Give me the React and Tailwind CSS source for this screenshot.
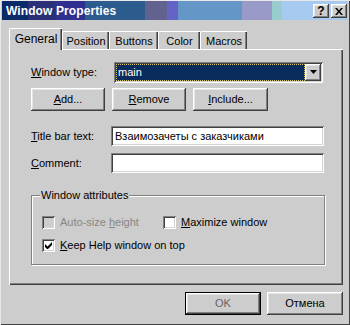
import React from "react";

const raised =
  "shadow-[inset_-1px_-1px_#404040,inset_1px_1px_#ffffff,inset_-2px_-2px_#808080,inset_2px_2px_#e4e4e4]";
const sunken =
  "shadow-[inset_1px_1px_#808080,inset_-1px_-1px_#ffffff,inset_2px_2px_#404040,inset_-2px_-2px_#d4d4d4]";

function Btn({ children, className = "" }) {
  return (
    <div
      className={`flex items-center justify-center h-[23px] bg-[#cdcdcd] ${raised} ${className}`}
    >
      {children}
    </div>
  );
}

function Check({ checked, disabled, children, className = "" }) {
  return (
    <div className={`flex items-center gap-[5px] ${className}`}>
      <div
        className={`w-[13px] h-[13px] flex items-center justify-center ${sunken} ${
          disabled ? "bg-[#cdcdcd]" : "bg-white"
        }`}
      >
        {checked && (
          <svg width="7" height="7" viewBox="0 0 7 7">
            <path d="M0 2v3l2 2h1l4-4V0L2.5 4.5Z" fill="#000" />
          </svg>
        )}
      </div>
      <span className={disabled ? "text-[#868686]" : "text-black"}>{children}</span>
    </div>
  );
}

function Field({ value }) {
  return (
    <div className={`w-[213px] h-[20px] bg-white pl-[4px] flex items-center ${sunken}`}>
      {value}
    </div>
  );
}

export default function App() {
  return (
    <div className="w-[350px] h-[325px] bg-[#cdcdcd] font-['Liberation_Sans',Arial,sans-serif] text-[11px] text-black leading-none pt-[1px] pl-[2px] pr-[2px] shadow-[inset_1px_1px_#e8e8e8,inset_-1px_-1px_#404040] overflow-hidden select-none">
      {/* title bar */}
      <div className="h-[19px] flex items-center pl-[4px] pr-[1px] bg-[linear-gradient(90deg,#0b2b68_0px,#0b2b68_26px,#2a3077_26px,#2a3077_53px,#2f2f90_53px,#2f2f90_83px,#2c5b8e_83px,#2c5b8e_143px,#62628f_143px,#62628f_165px,#6464c6_165px,#6464c6_176px,#6496c8_176px,#6496c8_240px,#9a9ac8_240px,#9a9ac8_270px,#99cccc_270px,#99cccc_280px,#a6caf0_280px)]">
        <span className="text-white font-bold text-[12px] tracking-[0.1px]">Window Properties</span>
        <div className="ml-auto flex gap-[2px] mt-[1px]">
          <div className={`w-[16px] h-[14px] bg-[#cdcdcd] flex items-center justify-center font-bold text-[12px] ${raised}`}>
            ?
          </div>
          <div className={`w-[16px] h-[14px] bg-[#cdcdcd] flex items-center justify-center ${raised}`}>
            <svg width="8" height="7" viewBox="0 0 8 7">
              <path d="M0 0h2l2 2.5L6 0h2L5 3.5 8 7H6L4 4.5 2 7H0l3-3.5Z" fill="#000" />
            </svg>
          </div>
        </div>
      </div>

      {/* tabs */}
      <div className="mt-[8px] ml-[7px] h-[21px] flex items-end relative z-10">
        <div className="w-[53px] h-[22px] -mb-px bg-[#cdcdcd] border-l border-t border-white rounded-tl-[2px] shadow-[inset_-1px_0_#404040,inset_-2px_0_#808080] flex justify-center pt-[4px] text-[12px]">
          General
        </div>
        {[
          ["Position", "w-[47px]"],
          ["Buttons", "w-[49px]"],
          ["Color", "w-[42px]"],
          ["Macros", "w-[47px]"],
        ].map(([t, w]) => (
          <div
            key={t}
            className={`${w} h-[18px] border-l border-t border-white rounded-tl-[2px] shadow-[inset_-1px_0_#404040,inset_-2px_0_#808080] flex justify-center pt-[4px] text-[11px]`}
          >
            {t}
          </div>
        ))}
      </div>

      {/* panel */}
      <div className="ml-[7px] w-[334px] h-[236px] border-l border-t border-white shadow-[inset_-1px_-1px_#404040,inset_-2px_-2px_#808080] pl-[21px] pt-[12px]">
        <div className="flex items-center h-[20px]">
          <span className="w-[83px]">
            <u>W</u>indow type:
          </span>
          <div className={`w-[209px] h-[21px] bg-white p-[2px] flex ${sunken}`}>
            <div className="flex-1 bg-[#0a2c5c] text-white flex items-center pl-[2px] outline outline-1 outline-dotted outline-[#d8c860] -outline-offset-1">
              main
            </div>
            <div className={`w-[16px] bg-[#cdcdcd] flex items-center justify-center ${raised}`}>
              <svg width="7" height="4" viewBox="0 0 7 4">
                <path d="M0 0h7L3.5 4Z" fill="#000" />
              </svg>
            </div>
          </div>
        </div>

        <div className="mt-[6px] flex gap-[7px]">
          <Btn className="w-[74px]">
            <span>
              <u>A</u>dd...
            </span>
          </Btn>
          <Btn className="w-[74px]">
            <span>
              <u>R</u>emove
            </span>
          </Btn>
          <Btn className="w-[75px]">
            <span>
              <u>I</u>nclude...
            </span>
          </Btn>
        </div>

        <div className="mt-[15px] flex items-center">
          <span className="w-[80px]">
            <u>T</u>itle bar text:
          </span>
          <Field value="Взаимозачеты с заказчиками" />
        </div>
        <div className="mt-[7px] flex items-center">
          <span className="w-[80px]">
            <u>C</u>omment:
          </span>
          <Field value="" />
        </div>

        <div className="mt-[22px] relative w-[294px] h-[70px] border border-[#808080] shadow-[inset_1px_1px_#ffffff,1px_1px_#ffffff] pl-[10px] pt-[20px]">
          <span className="absolute -top-[6px] left-[8px] px-px bg-[#cdcdcd]">Window attributes</span>
          <div className="flex">
            <Check disabled className="w-[121px]">
              Auto-size <u>h</u>eight
            </Check>
            <Check>
              <u>M</u>aximize window
            </Check>
          </div>
          <Check checked className="mt-[10px]">
            <u>K</u>eep Help window on top
          </Check>
        </div>
      </div>

      {/* dialog buttons */}
      <div className="mt-[7px] flex justify-end gap-[6px] pr-[5px]">
        <Btn className="w-[76px] border border-black text-[#666]">OK</Btn>
        <Btn className="w-[76px]">Отмена</Btn>
      </div>
    </div>
  );
}
